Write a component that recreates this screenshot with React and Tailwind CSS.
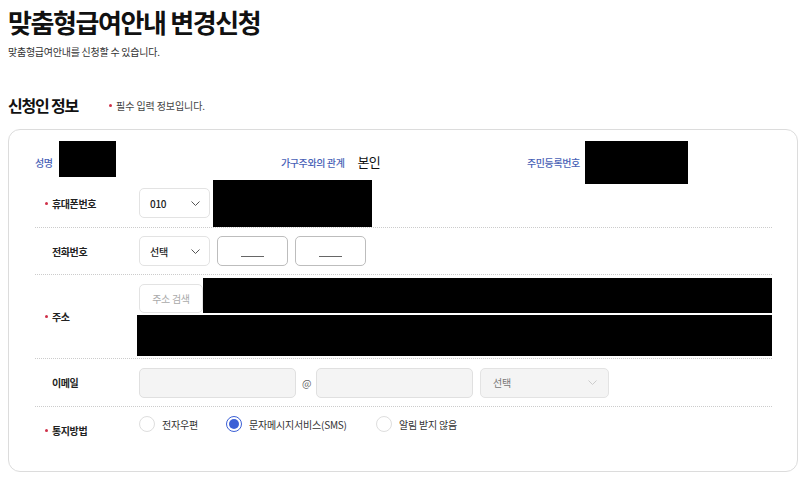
import React from "react";

// ─── small pieces ─────────────────────────────────────────────────────────────
const Chevron = ({ className = "stroke-[#555]" }) => (
  <svg width="9" height="5" viewBox="0 0 9 5" fill="none" className={className}>
    <polyline points="0.5,0.5 4.5,4.5 8.5,0.5" strokeWidth="1" />
  </svg>
);

const Redacted = ({ className }) => <div className={`bg-black shrink-0 ${className}`} />;

const Label = ({ required, children }) => (
  <div className="w-[104px] shrink-0 pl-[10px] flex items-center gap-[4px]">
    <span className={`w-[3px] h-[3px] rounded-full ${required ? "bg-[#cf3149]" : "bg-transparent"}`} />
    <span className="text-[10px] font-bold tracking-[-0.4px] text-[#222]">{children}</span>
  </div>
);

const Select = ({ value, muted }) => (
  <div className="w-[71px] h-[30px] shrink-0 rounded-[5px] border border-[#e3e3e3] bg-white pl-[10px] pr-[9px] flex items-center justify-between">
    <span className={`text-[10px] tracking-[-0.3px] ${muted ? "text-[#777]" : "text-[#222] font-medium"}`}>{value}</span>
    <Chevron />
  </div>
);

const Radio = ({ checked, label, className }) => (
  <div className={`flex items-center gap-[7px] shrink-0 ${className}`}>
    <span
      className={`w-[16px] h-[16px] rounded-full border flex items-center justify-center ${
        checked ? "border-[#3c60d6]" : "border-[#dedede]"
      }`}
    >
      {checked && <span className="w-[10px] h-[10px] rounded-full bg-[#3c60d6]" />}
    </span>
    <span className="text-[10px] tracking-[-0.2px] text-[#333]">{label}</span>
  </div>
);

const InfoLabel = ({ children }) => (
  <span className="text-[10px] font-medium tracking-[-0.4px] text-[#4861b6] shrink-0">{children}</span>
);

// ─── page ─────────────────────────────────────────────────────────────────────
export default function App() {
  return (
    <div className="w-[810px] h-[482px] overflow-hidden bg-white font-['Noto_Sans_CJK_KR','Noto_Sans',sans-serif] text-[#222]">
      <div className="px-2 pt-[5px]">
        <h1 className="text-[26px] leading-[34px] font-bold tracking-[-1.4px] text-[#111]">맞춤형급여안내 변경신청</h1>
        <p className="mt-[6px] text-[10px] leading-[14px] tracking-[-0.25px] text-[#333]">
          맞춤형급여안내를 신청할 수 있습니다.
        </p>

        <div className="mt-[36px] h-[20px] flex items-center">
          <h2 className="text-[16px] leading-[20px] font-bold tracking-[-1.2px] text-[#111] whitespace-pre">
            신청인 정보
          </h2>
          <div className="ml-[31px] flex items-center gap-[4px]">
            <span className="w-[3px] h-[3px] rounded-full bg-[#cf3149]" />
            <span className="text-[10px] tracking-[-0.1px] text-[#444]">필수 입력 정보입니다.</span>
          </div>
        </div>
      </div>

      {/* card */}
      <div className="ml-2 mt-[14px] w-[790px] h-[343px] rounded-[12px] border border-[#dcdcdc] pl-[26px] pr-[25px]">
        {/* 성명 / 관계 / 주민번호 */}
        <div className="mt-[10px] h-[44px] grid grid-cols-[246px_246px_1fr] items-center">
          <div className="flex items-center gap-[6px]">
            <InfoLabel>성명</InfoLabel>
            <Redacted className="w-[57px] h-[36px] mb-[6px]" />
          </div>
          <div className="flex items-center gap-[13px]">
            <InfoLabel>가구주와의 관계</InfoLabel>
            <span className="text-[13px] tracking-[-0.6px] text-[#111]">본인</span>
          </div>
          <div className="flex items-center gap-[5px]">
            <InfoLabel>주민등록번호</InfoLabel>
            <Redacted className="w-[103px] h-[43px]" />
          </div>
        </div>

        {/* 휴대폰번호 */}
        <div className="h-[44px] pb-[5px] flex items-center border-b border-dotted border-[#cccccc]">
          <Label required>휴대폰번호</Label>
          <Select value="010" />
          <Redacted className="ml-[3px] w-[159px] h-[47px]" />
        </div>

        {/* 전화번호 */}
        <div className="h-[47px] flex items-center gap-[7px] border-b border-dotted border-[#cccccc]">
          <div className="-mr-[7px] flex">
            <Label>전화번호</Label>
          </div>
          <Select value="선택" />
          {[0, 1].map((i) => (
            <div
              key={i}
              className="w-[71px] h-[30px] rounded-[5px] border border-[#bdbdbd] flex items-center justify-center"
            >
              <span className="w-[23px] h-[1px] mt-[10px] bg-[#666]" />
            </div>
          ))}
        </div>

        {/* 주소 */}
        <div className="h-[84px] flex items-center border-b border-dotted border-[#cccccc]">
          <Label required>주소</Label>
          <div className="flex-1 flex flex-col">
            <div className="h-[35px] flex items-end">
              <div className="w-[64px] h-[29px] shrink-0 rounded-[5px] border border-[#e3e3e3] flex items-center justify-center">
                <span className="text-[10px] tracking-[-0.3px] text-[#aaaaaa]">주소 검색</span>
              </div>
              <Redacted className="flex-1 h-[35px]" />
            </div>
            <Redacted className="mt-[2px] -ml-[2px] h-[41px]" />
          </div>
        </div>

        {/* 이메일 */}
        <div className="h-[48px] flex items-center border-b border-dotted border-[#cccccc]">
          <Label>이메일</Label>
          <div className="w-[157px] h-[30px] rounded-[5px] border border-[#e0e0e0] bg-[#f4f4f4]" />
          <span className="ml-[6px] mr-[4px] w-[10px] text-[10px] text-[#666]">@</span>
          <div className="w-[157px] h-[30px] rounded-[5px] border border-[#e0e0e0] bg-[#f4f4f4]" />
          <div className="ml-[7px] w-[129px] h-[30px] rounded-[5px] border border-[#e3e3e3] bg-[#f4f4f4] pl-[12px] pr-[11px] flex items-center justify-between">
            <span className="text-[10px] tracking-[-0.3px] text-[#777]">선택</span>
            <Chevron className="stroke-[#cccccc]" />
          </div>
        </div>

        {/* 통지방법 */}
        <div className="h-[46px] flex items-center">
          <Label required>통지방법</Label>
          <div className="self-start mt-[9px] flex items-center">
            <Radio label="전자우편" className="w-[87px]" />
            <Radio checked label="문자메시지서비스(SMS)" className="w-[150px]" />
            <Radio label="알림 받지 않음" />
          </div>
        </div>
      </div>
    </div>
  );
}
